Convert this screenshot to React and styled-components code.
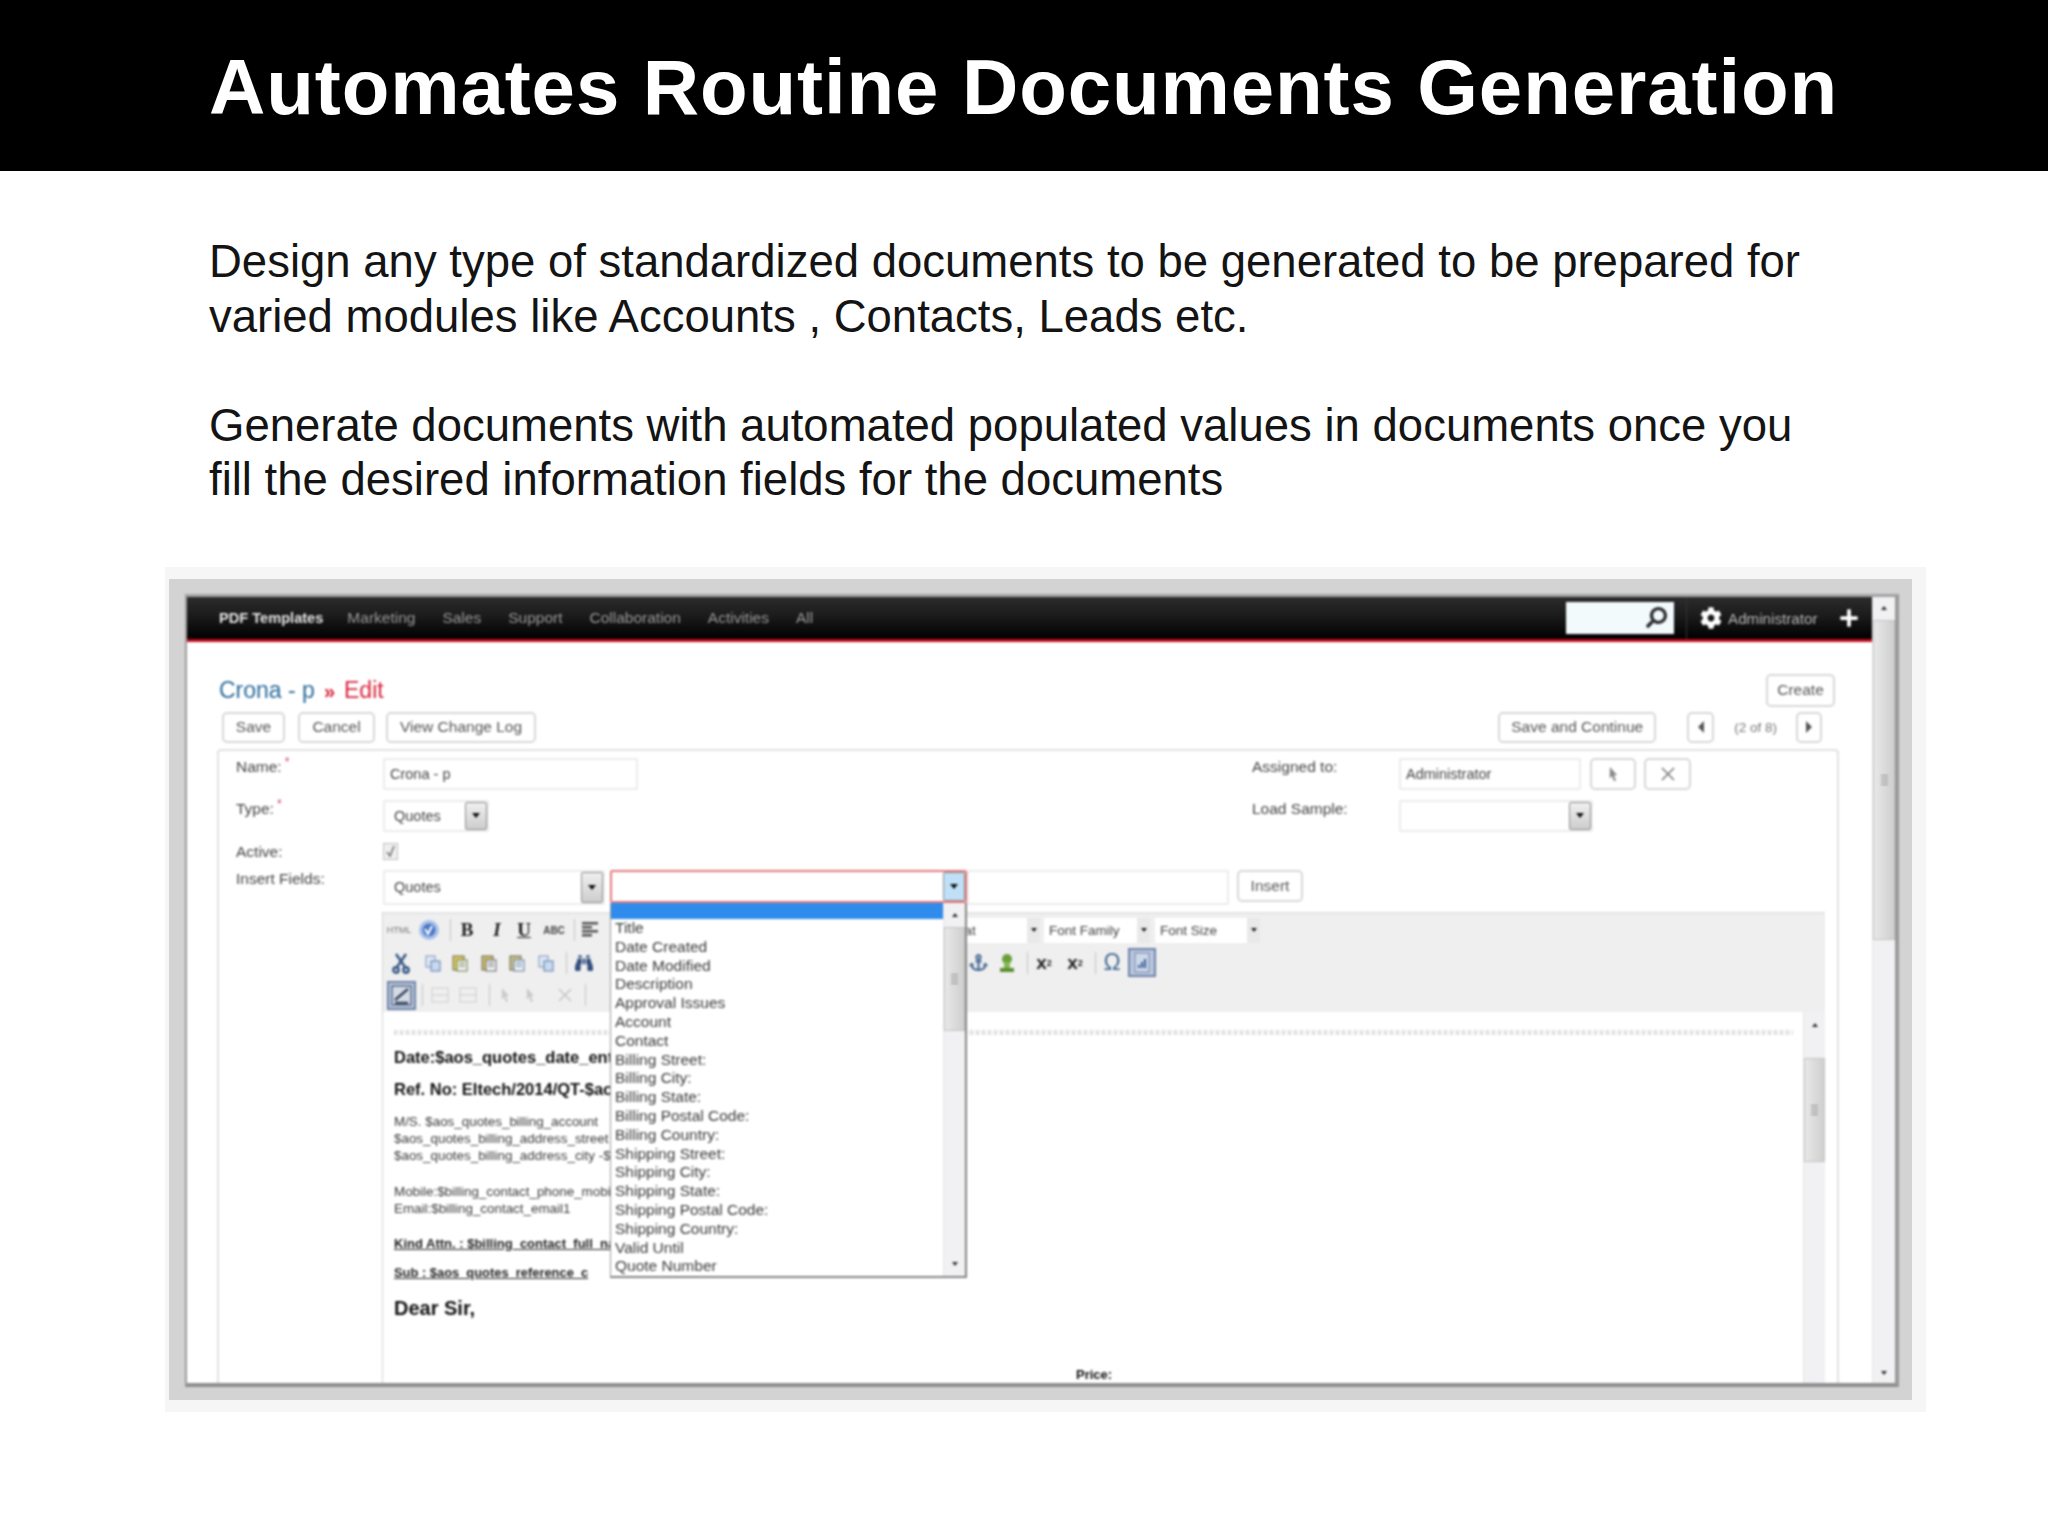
import React from 'react';
import styled, { createGlobalStyle } from 'styled-components';
import { FaCog, FaSearch, FaPlus, FaBinoculars, FaAnchor } from 'react-icons/fa';

const GlobalStyle = createGlobalStyle`
  html, body {
    margin: 0;
    padding: 0;
    background: #fff;
  }
  body {
    font-family: "Liberation Sans", Arial, sans-serif;
  }
`;

const Page = styled.div`
  width: 2048px;
  height: 1536px;
  overflow: hidden;
  background: #fff;
`;

const TitleBar = styled.header`
  height: 171px;
  box-sizing: border-box;
  background: #000;
  display: flex;
  align-items: center;
  padding: 3px 0 0 209px;
`;

const Title = styled.h1`
  margin: 0;
  color: #fff;
  font-size: 78px;
  line-height: 1;
  font-weight: 700;
  letter-spacing: 0.9px;
  white-space: nowrap;
`;

const Copy = styled.div`
  padding: 64px 0 0 209px;
  width: 1620px;
  color: #141414;
  font-size: 45.5px;
  line-height: 54.6px;
`;

const Para = styled.p`
  margin: 0 0 54.6px;
`;

const Halo = styled.div`
  width: 1761px;
  margin: 59px 0 0 165px;
  padding: 12px 14px 12px 4px;
  box-sizing: border-box;
  background: #f6f6f7;
`;

const Band = styled.div`
  padding: 15px 13px 13px 16px;
  background: #d3d3d4;
`;

const Win = styled.div`
  height: 786px;
  display: flex;
  background: #fff;
  border-style: solid;
  border-color: #a2a2a2 #9a9a9a #8e8e8e #9c9c9c;
  border-width: 3px 4px 4px 2px;
  overflow: hidden;
  filter: blur(0.8px);
`;

const Main = styled.div`
  flex: 1;
  min-width: 0;
  display: flex;
  flex-direction: column;
`;

const Nav = styled.nav`
  height: 42px;
  flex: none;
  display: flex;
  align-items: center;
  padding: 0 13px 0 32px;
  background: linear-gradient(#2c2c2c, #1b1b1b 45%, #000);
  border-bottom: 3px solid #c40a1e;
`;

const NavItem = styled.span`
  margin-right: ${p => (p.$active ? 24 : 27)}px;
  color: ${p => (p.$active ? '#e4e4e4' : '#9a9a9a')};
  font-size: ${p => (p.$active ? 14.6 : 15.5)}px;
  font-weight: ${p => (p.$active ? 700 : 400)};
`;

const NavRight = styled.div`
  margin-left: auto;
  display: flex;
  align-items: center;
  color: #fff;
`;

const Search = styled.div`
  width: 108px;
  height: 32px;
  box-sizing: border-box;
  padding-right: 7px;
  display: flex;
  align-items: center;
  justify-content: flex-end;
  background: #f3fafc;
  color: #2b2b2b;
  font-size: 21px;

  svg {
    transform: scaleX(-1);
  }
`;

const NavDivider = styled.i`
  width: 1px;
  height: 42px;
  margin: 0 13px 0 12px;
  background: #333;
`;

const AdminName = styled.span`
  margin: 2px 20px 0 6px;
  width: 91px;
  color: #b8b8b8;
  font-size: 15.2px;
  white-space: nowrap;
`;

const Content = styled.div`
  flex: 1;
  min-height: 0;
  display: flex;
  flex-direction: column;
  padding: 32px 33px 0 30px;
`;

const HeadRow = styled.div`
  height: 33px;
  flex: none;
  display: flex;
  align-items: center;
  justify-content: space-between;
  padding: 0 4px 0 2px;
`;

const Crumb = styled.div`
  font-size: 23px;
  color: #2b6c9c;
  white-space: nowrap;

  b {
    margin: 0 9px;
    font-weight: 700;
    font-size: 20px;
    color: #d8243c;
  }

  em {
    font-style: normal;
    color: #d8243c;
  }
`;

const ActionRow = styled.div`
  height: 31px;
  flex: none;
  margin-top: 5px;
  padding: 0 17px 0 5px;
  display: flex;
  align-items: center;
`;

const Btn = styled.span`
  width: ${p => p.$w}px;
  height: ${p => p.$h || 31}px;
  margin-left: ${p => p.$ml || 0}px;
  flex: none;
  box-sizing: border-box;
  display: flex;
  align-items: center;
  justify-content: center;
  background: #fff;
  border: 2px solid #d8d8d8;
  border-radius: 5px;
  color: #555;
  font-size: 15.5px;
  white-space: nowrap;
`;

const Tri = styled.i`
  width: 0;
  height: 0;
  border-style: solid;
  border-color: transparent;
  border-width: 6px;
  ${p => p.$dir === 'left' && 'border-right-color: #555; border-left-width: 0;'}
  ${p => p.$dir === 'right' && 'border-left-color: #555; border-right-width: 0;'}
`;

const Pager = styled.span`
  margin: 0 19px 0 20px;
  color: #777;
  font-size: 13.5px;
  white-space: nowrap;
`;

const Push = styled.span`
  margin-left: auto;
`;

const Panel = styled.section`
  flex: 1;
  min-height: 0;
  margin-top: 6px;
  padding: 7px 13px 0 17px;
  display: flex;
  flex-direction: column;
  border: 2px solid #e2e2e2;
  border-bottom: 0;
  border-radius: 4px 4px 0 0;
`;

const FormRow = styled.div`
  display: grid;
  grid-template-columns: 147px 869px 147px 1fr;
  align-items: start;
  min-height: ${p => p.$h}px;
  margin-top: ${p => p.$mt || 0}px;
`;

const Label = styled.label`
  color: #444;
  font-size: 15.5px;
  line-height: 18px;

  sup {
    color: #c9485a;
    font-size: 12px;
    line-height: 0;
    margin-left: 3px;
  }
`;

const Controls = styled.div`
  display: flex;
  align-items: flex-start;
`;

const Field = styled.div`
  width: ${p => p.$w}px;
  height: ${p => p.$h || 32}px;
  margin-left: ${p => p.$ml || 0}px;
  flex: none;
  box-sizing: border-box;
  padding-left: 5px;
  display: flex;
  align-items: center;
  border: 2px solid #ececec;
  border-radius: 2px;
  color: #444;
  font-size: 14.5px;
`;

const Select = styled.div`
  position: relative;
  width: ${p => p.$w}px;
  height: ${p => p.$h || 32}px;
  margin-left: ${p => p.$ml || 0}px;
  flex: none;
  box-sizing: border-box;
  display: flex;
  align-items: stretch;
  border: 2px solid ${p => (p.$focus ? '#e57a7f' : '#ececec')};
  border-radius: 2px;
  color: #444;
  font-size: 14.5px;
`;

const SelectValue = styled.span`
  flex: 1;
  padding-left: 9px;
  display: flex;
  align-items: center;
`;

const SelectArrow = styled.span`
  width: 20px;
  flex: none;
  display: flex;
  align-items: center;
  justify-content: center;
  background: ${p => (p.$focus ? '#bfe0f6' : 'linear-gradient(#f0f0f0, #cdcdcd)')};
  border: 1px solid #8f8f8f;
  border-radius: 2px;

  &::after {
    content: '';
    border: 4px solid transparent;
    border-top: 5px solid #111;
    border-bottom: 0;
  }
`;

const Check = styled.span`
  width: 15px;
  height: 17px;
  box-sizing: border-box;
  display: flex;
  align-items: center;
  justify-content: center;
  background: #efefef;
  border: 1px solid #c0c0c0;
  color: #777;
`;

const ListBox = styled.div`
  position: absolute;
  z-index: 5;
  top: 31px;
  left: -2px;
  width: 357px;
  height: 375px;
  box-sizing: border-box;
  display: flex;
  background: #fff;
  border-left: 1px solid #9c9c9c;
  border-right: 2px solid #858585;
  border-bottom: 2px solid #858585;
`;

const ListRows = styled.div`
  flex: 1;
  min-width: 0;
`;

const BlueRow = styled.div`
  height: 16px;
  background: #2f8cec;
`;

const ListRow = styled.div`
  height: 18.8px;
  padding-left: 4px;
  color: #3a3a3a;
  font-size: 15.5px;
  line-height: 18.8px;
  white-space: nowrap;
`;

const Scroll = styled.div`
  width: ${p => p.$w}px;
  flex: none;
  display: flex;
  flex-direction: column;
  align-items: center;
  background: #f1f1f3;
  border-left: 1px solid #e6e6e6;
`;

const ScrollArrow = styled.span`
  height: ${p => p.$h}px;
  flex: none;
  display: flex;
  align-items: center;
  justify-content: center;
  margin-top: ${p => (p.$down ? 'auto' : '0')};

  &::after {
    content: '';
    border: 3px solid transparent;
    ${p => (p.$down ? 'border-top: 4px solid #333; border-bottom: 0;' : 'border-bottom: 4px solid #333; border-top: 0;')}
  }
`;

const Thumb = styled.span`
  width: 100%;
  height: ${p => p.$h}px;
  margin-top: ${p => p.$mt || 0}px;
  flex: none;
  box-sizing: border-box;
  display: flex;
  align-items: center;
  justify-content: center;
  background: linear-gradient(90deg, #e8e8e8, #cfcfcf);
  border: 1px solid #c4c4c4;

  &::after {
    content: '';
    width: 7px;
    height: 10px;
    background: repeating-linear-gradient(#8d8d8d 0 1px, transparent 1px 3px);
  }
`;

const Editor = styled.div`
  flex: 1;
  min-height: 0;
  margin: 7px -1px 0 146px;
  display: flex;
  flex-direction: column;
  border-left: 1px solid #d4d4d4;
`;

const Toolbar = styled.div`
  height: 100px;
  flex: none;
  box-sizing: border-box;
  background: #efefef;
  border-top: 2px solid #e4e4e4;
`;

const ToolRow = styled.div`
  height: 32.5px;
  padding-left: 4px;
  display: flex;
  align-items: center;
`;

const Tool = styled.span`
  width: ${p => p.$w || 24}px;
  height: ${p => (p.$active ? 29 : 24)}px;
  margin-left: ${p => p.$ml || 0}px;
  flex: none;
  box-sizing: border-box;
  display: flex;
  align-items: center;
  justify-content: center;
  color: ${p => p.$color || '#222'};
  font-family: ${p => (p.$serif ? '"Liberation Serif", serif' : 'inherit')};
  font-size: ${p => p.$size || 17}px;
  font-weight: ${p => (p.$bold ? 700 : 400)};
  font-style: ${p => (p.$italic ? 'italic' : 'normal')};
  text-decoration: ${p => (p.$under ? 'underline' : 'none')};
  opacity: ${p => (p.$faint ? 0.35 : 1)};
  ${p => p.$active && 'background: #b9c6dc; border: 2px solid #6f84a8;'}

  sub, sup {
    font-size: 9px;
  }
`;

const ToolSep = styled.i`
  width: 1px;
  height: 22px;
  margin-left: ${p => p.$ml}px;
  flex: none;
  background: #c4c4c4;
`;

const MiniSelect = styled.span`
  width: ${p => p.$w}px;
  height: 25px;
  margin-left: ${p => p.$ml || 0}px;
  flex: none;
  box-sizing: border-box;
  padding-left: 5px;
  display: flex;
  align-items: center;
  justify-content: space-between;
  background: linear-gradient(90deg, #fff calc(100% - 13px), #e9e9e9 calc(100% - 13px));
  color: #444;
  font-size: 13.5px;
  white-space: nowrap;

  &::after {
    content: '';
    margin-right: 3px;
    border: 3.5px solid transparent;
    border-top: 4px solid #222;
    border-bottom: 0;
  }
`;

const EditArea = styled.div`
  flex: 1;
  min-height: 0;
  display: flex;
`;

const Doc = styled.div`
  flex: 1;
  min-width: 0;
  padding: 18px 10px 0 11px;
  color: #222;
`;

const Ridge = styled.div`
  height: 5px;
  margin-bottom: 10px;
  background: repeating-linear-gradient(90deg, #e0e0e0 0 3px, #f8f8f8 3px 6px);
`;

const DocLine = styled.div`
  width: ${p => (p.$clip ? '216px' : 'auto')};
  overflow: ${p => (p.$clip ? 'hidden' : 'visible')};
  margin-top: ${p => p.$mt || 0}px;
  margin-left: ${p => p.$ml || 0}px;
  height: ${p => p.$lh}px;
  color: ${p => p.$color || '#111'};
  font-size: ${p => p.$size}px;
  font-weight: ${p => (p.$bold ? 700 : 400)};
  line-height: ${p => p.$lh}px;
  text-decoration: ${p => (p.$under ? 'underline' : 'none')};
  white-space: nowrap;
`;

const Page2Icon = ({ fill, accent }) => (
  <svg width="20" height="20" viewBox="0 0 20 20">
    <rect x="3" y="3" width="11" height="14" fill={fill} stroke="#6b6b55" />
    <rect x="7" y="7" width="10" height="11" fill="#eef0f2" stroke={accent} />
    <path d="M9 10h6M9 13h6" stroke={accent} strokeWidth="1" />
  </svg>
);

const Cut = () => (
  <svg width="20" height="22" viewBox="0 0 20 22" fill="none" stroke="#3d5c8a" strokeWidth="2.6">
    <path d="M5 2l9 13M15 2L6 15" />
    <circle cx="5" cy="18" r="2.6" />
    <circle cx="15" cy="18" r="2.6" />
  </svg>
);

const Copy2 = () => (
  <svg width="20" height="20" viewBox="0 0 20 20">
    <rect x="3" y="3" width="9" height="11" fill="#dfe8f4" stroke="#7d97bd" />
    <rect x="8" y="8" width="9" height="10" fill="#c9d9ee" stroke="#5f7fae" />
  </svg>
);

const Spell = () => (
  <svg width="22" height="22" viewBox="0 0 22 22">
    <circle cx="11" cy="11" r="10" fill="#a9c2ea" />
    <circle cx="11" cy="11" r="6.5" fill="#4d78c4" />
    <path d="M7 10l3 5 4-8" fill="none" stroke="#fff" strokeWidth="2" />
  </svg>
);

const AlignIcon = () => (
  <svg width="18" height="18" viewBox="0 0 18 18" fill="#555">
    <path d="M1 1h16v2.5H1zM1 5h10v2.5H1zM1 9h16v2.5H1zM1 13h10v2.5H1z" />
  </svg>
);

const Pointer = () => (
  <svg width="14" height="16" viewBox="0 0 14 16" fill="#8a8a8a">
    <path d="M4 1l7 8-3 .4 2 5-2 .8-2-5-2.4 2z" />
  </svg>
);

const Cross = () => (
  <svg width="16" height="16" viewBox="0 0 16 16" stroke="#7d7d7d" strokeWidth="1.6">
    <path d="M2 2l12 12M14 2L2 14" />
  </svg>
);

const Tick = () => (
  <svg width="11" height="13" viewBox="0 0 11 13" fill="none" stroke="#777" strokeWidth="1.6">
    <path d="M2 7l3 4 4-10" />
  </svg>
);

const GreenFlag = () => (
  <svg width="18" height="22" viewBox="0 0 18 22">
    <circle cx="9" cy="7" r="5" fill="#6aa03c" />
    <rect x="6" y="10" width="6" height="6" fill="#86b854" />
    <rect x="2" y="16" width="14" height="4" fill="#5b8e32" />
  </svg>
);

const TableIcon = () => (
  <svg width="24" height="25" viewBox="0 0 24 25">
    <rect x="5" y="3" width="14" height="19" fill="#cdd8ea" stroke="#7288ad" />
    <path d="M15 18V9M12 18v-6M9 18v-3" stroke="#3d5f96" strokeWidth="2" />
  </svg>
);

const SourceIcon = () => (
  <svg width="25" height="25" viewBox="0 0 25 25" fill="none">
    <rect x="3" y="3" width="19" height="19" fill="#d4dae5" stroke="#5f6f8a" strokeWidth="1.5" />
    <path d="M6 17L19 6M6 20h13" stroke="#39465c" strokeWidth="2.4" />
  </svg>
);

const FaintBox = () => (
  <svg width="20" height="18" viewBox="0 0 20 18" fill="none" stroke="#8f8f8f">
    <rect x="2" y="2" width="16" height="14" />
    <path d="M2 9h16" />
  </svg>
);

const FIELDS = [
  'Title', 'Date Created', 'Date Modified', 'Description', 'Approval Issues', 'Account', 'Contact',
  'Billing Street:', 'Billing City:', 'Billing State:', 'Billing Postal Code:', 'Billing Country:',
  'Shipping Street:', 'Shipping City:', 'Shipping State:', 'Shipping Postal Code:', 'Shipping Country:',
  'Valid Until', 'Quote Number',
];

const NAV_ITEMS = ['Marketing', 'Sales', 'Support', 'Collaboration', 'Activities', 'All'];

const App = () => (
  <Page>
    <GlobalStyle />
    <TitleBar>
      <Title>Automates Routine Documents Generation</Title>
    </TitleBar>
    <Copy>
      <Para>
        Design any type of standardized documents to be generated to be prepared for varied modules like Accounts , Contacts, Leads etc.
      </Para>
      <Para>
        Generate documents with automated populated values in documents once you fill the desired information fields for the documents
      </Para>
    </Copy>
    <Halo>
      <Band>
        <Win>
          <Main>
            <Nav>
              <NavItem $active>PDF Templates</NavItem>
              {NAV_ITEMS.map(item => <NavItem key={item}>{item}</NavItem>)}
              <NavRight>
                <Search><FaSearch /></Search>
                <NavDivider />
                <FaCog size={22} />
                <AdminName>Administrator</AdminName>
                <FaPlus size={20} />
              </NavRight>
            </Nav>
            <Content>
              <HeadRow>
                <Crumb>Crona - p<b>»</b><em>Edit</em></Crumb>
                <Btn $w={69} $h={33}>Create</Btn>
              </HeadRow>
              <ActionRow>
                <Btn $w={63}>Save</Btn>
                <Btn $w={77} $ml={13}>Cancel</Btn>
                <Btn $w={150} $ml={11}>View Change Log</Btn>
                <Push />
                <Btn $w={158}>Save and Continue</Btn>
                <Btn $w={27} $ml={31}><Tri $dir="left" /></Btn>
                <Pager>(2 of 8)</Pager>
                <Btn $w={26}><Tri $dir="right" /></Btn>
              </ActionRow>
              <Panel>
                <FormRow $h={32}>
                  <Label>Name:<sup>*</sup></Label>
                  <Controls><Field $w={255}>Crona - p</Field></Controls>
                  <Label>Assigned to:</Label>
                  <Controls>
                    <Field $w={182}>Administrator</Field>
                    <Btn $w={46} $h={32} $ml={9}><Pointer /></Btn>
                    <Btn $w={47} $h={32} $ml={8}><Cross /></Btn>
                  </Controls>
                </FormRow>
                <FormRow $h={32} $mt={10}>
                  <Label>Type:<sup>*</sup></Label>
                  <Controls>
                    <Select $w={106}><SelectValue>Quotes</SelectValue><SelectArrow /></Select>
                  </Controls>
                  <Label>Load Sample:</Label>
                  <Controls>
                    <Select $w={194}><SelectValue /><SelectArrow /></Select>
                  </Controls>
                </FormRow>
                <FormRow $h={17} $mt={11}>
                  <Label>Active:</Label>
                  <Controls><Check><Tick /></Check></Controls>
                </FormRow>
                <FormRow $h={35} $mt={9}>
                  <Label>Insert Fields:</Label>
                  <Controls>
                    <Select $w={222} $h={35}><SelectValue>Quotes</SelectValue><SelectArrow /></Select>
                    <Select $w={357} $h={33} $ml={5} $focus>
                      <SelectValue />
                      <SelectArrow $focus />
                      <ListBox>
                        <ListRows>
                          <BlueRow />
                          {FIELDS.map(name => <ListRow key={name}>{name}</ListRow>)}
                        </ListRows>
                        <Scroll $w={21}>
                          <ScrollArrow $h={24} />
                          <Thumb $h={104} />
                          <ScrollArrow $h={24} $down />
                        </Scroll>
                      </ListBox>
                    </Select>
                    <Field $w={262} $h={35} />
                    <Btn $w={66} $h={32} $ml={8}>Insert</Btn>
                  </Controls>
                </FormRow>
                <Editor>
                  <Toolbar>
                    <ToolRow>
                      <Tool $size={9} $color="#777">HTML</Tool>
                      <Tool $ml={6}><Spell /></Tool>
                      <ToolSep $ml={9} />
                      <Tool $ml={4} $bold $serif $size={19}>B</Tool>
                      <Tool $ml={6} $bold $italic $serif $size={19}>I</Tool>
                      <Tool $ml={3} $bold $under $serif $size={19}>U</Tool>
                      <Tool $ml={6} $bold $size={10} $color="#444">ABC</Tool>
                      <ToolSep $ml={8} />
                      <Tool $ml={3}><AlignIcon /></Tool>
                      <MiniSelect $w={112} $ml={326}>Format</MiniSelect>
                      <MiniSelect $w={106} $ml={4}>Font Family</MiniSelect>
                      <MiniSelect $w={105} $ml={5}>Font Size</MiniSelect>
                    </ToolRow>
                    <ToolRow>
                      <Tool $ml={2}><Cut /></Tool>
                      <Tool $ml={8}><Copy2 /></Tool>
                      <Tool $ml={3}><Page2Icon fill="#d9c45a" accent="#6f8040" /></Tool>
                      <Tool $ml={5}><Page2Icon fill="#c9b96a" accent="#666" /></Tool>
                      <Tool $ml={4}><Page2Icon fill="#c7bd86" accent="#5e7ea6" /></Tool>
                      <Tool $ml={5}><Copy2 /></Tool>
                      <ToolSep $ml={8} />
                      <Tool $ml={5} $size={18} $color="#35507e"><FaBinoculars /></Tool>
                      <Tool $ml={370} $size={19} $color="#4a6a94"><FaAnchor /></Tool>
                      <Tool $ml={5}><GreenFlag /></Tool>
                      <ToolSep $ml={8} />
                      <Tool $ml={4} $bold $size={19}>x<sub>2</sub></Tool>
                      <Tool $ml={7} $bold $size={19}>x<sup>2</sup></Tool>
                      <ToolSep $ml={8} />
                      <Tool $ml={4} $size={23} $color="#446a94">Ω</Tool>
                      <Tool $ml={4} $w={28} $active><TableIcon /></Tool>
                    </ToolRow>
                    <ToolRow>
                      <Tool $w={29} $active><SourceIcon /></Tool>
                      <ToolSep $ml={6} />
                      <Tool $ml={5} $faint><FaintBox /></Tool>
                      <Tool $ml={4} $faint><FaintBox /></Tool>
                      <ToolSep $ml={9} />
                      <Tool $ml={3} $faint><Pointer /></Tool>
                      <Tool $ml={1} $faint><Pointer /></Tool>
                      <Tool $ml={11} $faint><Cross /></Tool>
                      <ToolSep $ml={8} />
                    </ToolRow>
                  </Toolbar>
                  <EditArea>
                    <Doc>
                      <Ridge />
                      <DocLine $clip $size={16.5} $lh={24} $bold>Date:$aos_quotes_date_entered</DocLine>
                      <DocLine $clip $size={16.5} $lh={24} $mt={8} $bold>Ref. No: Eltech/2014/QT-$aos_quotes_number</DocLine>
                      <DocLine $clip $size={13.4} $lh={17} $mt={12} $color="#3c3c3c">M/S. $aos_quotes_billing_account</DocLine>
                      <DocLine $clip $size={13.4} $lh={17} $color="#3c3c3c">$aos_quotes_billing_address_street</DocLine>
                      <DocLine $clip $size={13.4} $lh={17} $color="#3c3c3c">$aos_quotes_billing_address_city -$aos_quotes_zip</DocLine>
                      <DocLine $clip $size={13.4} $lh={17} $mt={19} $color="#3c3c3c">Mobile:$billing_contact_phone_mobile</DocLine>
                      <DocLine $clip $size={13.4} $lh={17} $color="#3c3c3c">Email:$billing_contact_email1</DocLine>
                      <DocLine $clip $size={13} $lh={17} $mt={18} $bold $under $color="#222">Kind Attn. : $billing_contact_full_name</DocLine>
                      <DocLine $clip $size={12.9} $lh={17} $mt={12} $bold $under $color="#222">Sub : $aos_quotes_reference_c</DocLine>
                      <DocLine $size={20} $lh={26} $mt={14} $bold>Dear Sir,</DocLine>
                      <DocLine $size={13} $lh={18} $mt={45} $ml={682} $bold>Price:</DocLine>
                    </Doc>
                    <Scroll $w={21}>
                      <ScrollArrow $h={26} />
                      <Thumb $h={104} $mt={20} />
                    </Scroll>
                  </EditArea>
                </Editor>
              </Panel>
            </Content>
          </Main>
          <Scroll $w={22}>
            <ScrollArrow $h={23} />
            <Thumb $h={320} />
            <ScrollArrow $h={20} $down />
          </Scroll>
        </Win>
      </Band>
    </Halo>
  </Page>
);

export default App;
